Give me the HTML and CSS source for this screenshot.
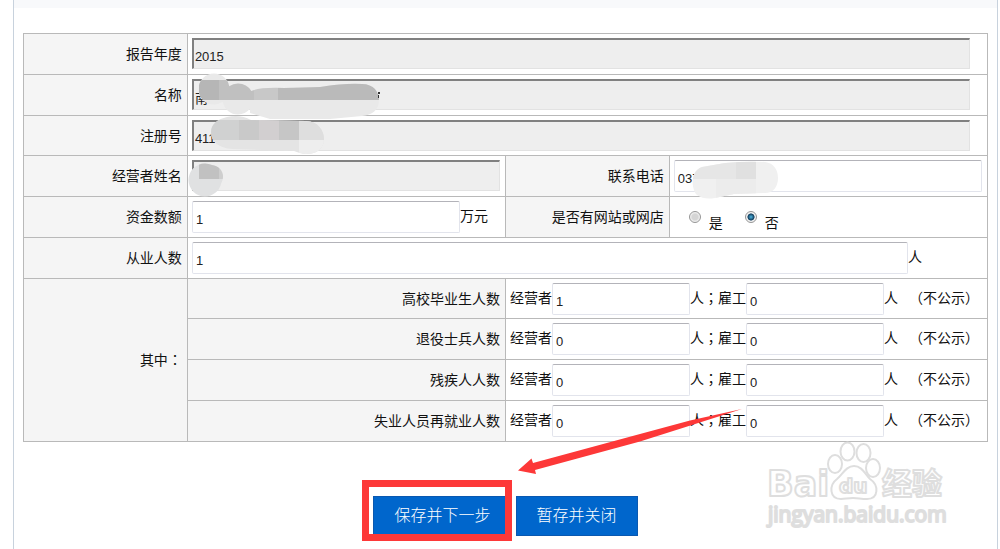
FILE: index.html
```html
<!DOCTYPE html>
<html lang="zh-CN">
<head>
<meta charset="utf-8">
<title>年度报告</title>
<link rel="stylesheet" href="styles.css">
</head>
<body>
<main class="panel">
  <div class="panel-strip"></div>
  <form class="report">
    <table class="form-table">
      <colgroup><col class="col-label"><col class="col-field"><col class="col-label"><col class="col-field"></colgroup>
      <tr>
        <th><label for="year">报告年度</label></th>
        <td colspan="3"><input class="field readonly inset" id="year" type="text" value="2015" readonly></td>
      </tr>
      <tr>
        <th><label for="name">名称</label></th>
        <td colspan="3">
          <input class="field readonly inset" id="name" type="text" value="南" readonly>
          <svg class="mask mask-name" viewBox="190 70 200 50" width="200" height="50" aria-hidden="true">
            <clipPath id="m1"><circle cx="214" cy="88" r="15.5"/><circle cx="238" cy="98" r="15.5"/><path d="M250 91Q256 86 284 87L320 86Q345 82 362 83C374 83 379 91 379 99C379 109 372 114 362 115L330 118H270L250 112Z"/></clipPath>
            <g clip-path="url(#m1)"><path fill="#e9e9e9" d="M190 70h200v50H190z"/><path fill="#b6b6b6" d="M199 79h20v20h-20z"/><path fill="#c0c0c0" d="M219 79h35v20h-35z"/><path fill="#c8c8c8" d="M254 79h24v20h-24z"/><path fill="#bababa" d="M278 79h110v20H278z"/></g>
            <path fill="#333" d="M378 91h2v2h-2zM378 94h1v3h-1z"/>
          </svg>
        </td>
      </tr>
      <tr>
        <th><label for="regno">注册号</label></th>
        <td colspan="3">
          <input class="field readonly inset" id="regno" type="text" value="411" readonly>
          <svg class="mask mask-regno" viewBox="205 110 125 45" width="125" height="45" aria-hidden="true">
            <clipPath id="m2"><path d="M227 116Q240 113 251 119L306 120C318 120 324 130 324 138C324 148 316 153 307 153C301 153 298 151 294 150L232 148C219 147 211 141 211 131C211 123 218 118 227 116Z"/></clipPath>
            <g clip-path="url(#m2)"><path fill="#e4e4e4" d="M205 110h125v45H205z"/><path fill="#d0d1d1" d="M205 119h34v20h-34z"/><path fill="#c9c9c9" d="M239 119h20v20h-20z"/><path fill="#d2cfd0" d="M259 119h20v20h-20z"/><path fill="#c6c6c6" d="M279 119h20v20h-20z"/><path fill="#dedede" d="M299 119h30v20h-30z"/><path fill="#eee" d="M299 139h30v20h-30z"/></g>
          </svg>
        </td>
      </tr>
      <tr>
        <th><label for="owner">经营者姓名</label></th>
        <td>
          <input class="field readonly" id="owner" type="text" readonly>
          <svg class="mask mask-owner" viewBox="188 160 40 40" width="40" height="40" aria-hidden="true">
            <clipPath id="m3"><circle cx="205" cy="180" r="16.5"/><circle cx="211" cy="177" r="12"/></clipPath>
            <g clip-path="url(#m3)"><path fill="#e0e1e2" d="M188 160h40v40h-40z"/><path fill="#c1c1c1" d="M199 160h20v19h-20z"/><path fill="#cecece" d="M219 160h9v19h-9z"/></g>
          </svg>
        </td>
        <th><label for="phone">联系电话</label></th>
        <td>
          <input class="field" id="phone" type="text" value="037">
          <svg class="mask mask-phone" viewBox="690 160 90 40" width="90" height="40" aria-hidden="true">
            <clipPath id="m4"><path d="M702 167L725 163Q745 161 765 162C774 163 778 170 778 178C778 187 773 193 765 193L734 194L715 198Q704 200 697 195C691 189 690 171 702 167Z"/></clipPath>
            <g clip-path="url(#m4)"><path fill="#f0f0f0" d="M690 160h90v40h-90z"/><path fill="#e6e6e6" d="M690 160h46v19h-46z"/><path fill="#e0e0e0" d="M736 160h20v19h-20z"/><path fill="#ececec" d="M716 179h40v20h-40z"/></g>
          </svg>
        </td>
      </tr>
      <tr>
        <th><label for="capital">资金数额</label></th>
        <td><div class="line"><input class="field" id="capital" type="text" value="1"><span class="unit unit-money">万元</span></div></td>
        <th id="shop-label">是否有网站或网店</th>
        <td>
          <div class="radios" role="radiogroup" aria-labelledby="shop-label">
            <label class="radio"><input type="radio" name="shop"><span>是</span></label>
            <label class="radio"><input type="radio" name="shop" checked><span>否</span></label>
          </div>
        </td>
      </tr>
      <tr>
        <th><label for="staff">从业人数</label></th>
        <td colspan="3"><div class="line"><input class="field" id="staff" type="text" value="1"><span class="unit unit-staff">人</span></div></td>
      </tr>
      <tr>
        <th rowspan="4">其中<span class="punct" lang="zh-TW">：</span></th>
        <th>高校毕业生人数</th>
        <td colspan="2"><div class="line"><label for="g1">经营者</label><input class="field" id="g1" type="text" value="1"><label for="g2">人<span class="punct" lang="zh-TW">；</span>雇工</label><input class="field" id="g2" type="text" value="0"><span class="unit unit-note">人<span class="note">（不公示）</span></span></div></td>
      </tr>
      <tr>
        <th>退役士兵人数</th>
        <td colspan="2"><div class="line"><label for="v1">经营者</label><input class="field" id="v1" type="text" value="0"><label for="v2">人<span class="punct" lang="zh-TW">；</span>雇工</label><input class="field" id="v2" type="text" value="0"><span class="unit unit-note">人<span class="note">（不公示）</span></span></div></td>
      </tr>
      <tr>
        <th>残疾人人数</th>
        <td colspan="2"><div class="line"><label for="d1">经营者</label><input class="field" id="d1" type="text" value="0"><label for="d2">人<span class="punct" lang="zh-TW">；</span>雇工</label><input class="field" id="d2" type="text" value="0"><span class="unit unit-note">人<span class="note">（不公示）</span></span></div></td>
      </tr>
      <tr>
        <th>失业人员再就业人数</th>
        <td colspan="2"><div class="line"><label for="u1">经营者</label><input class="field" id="u1" type="text" value="0"><label for="u2">人<span class="punct" lang="zh-TW">；</span>雇工</label><input class="field" id="u2" type="text" value="0"><span class="unit unit-note">人<span class="note">（不公示）</span></span></div></td>
      </tr>
    </table>
    <div class="actions">
      <div class="highlight">
        <button class="btn" type="button">保存并下一步</button>
        <svg class="arrow" viewBox="510 400 240 80" width="240" height="80" aria-hidden="true">
          <path fill="#fd3838" d="M518 470.500L531.500 458.500L533 463L640 434L690 420.500L742 409L692 425L640 441.500L535 470L536 474Z"/>
        </svg>
      </div>
      <button class="btn" type="button">暂存并关闭</button>
    </div>
  </form>
  <svg class="watermark" viewBox="762 440 188 92" width="188" height="92" role="img" aria-label="Baidu 经验">
    <g fill="#fff" stroke="#dedede" stroke-width="2" stroke-linejoin="round">
      <text class="wm-brand" x="767" y="496">Bai</text>
      <ellipse cx="835" cy="464" rx="7" ry="9"/><ellipse cx="847.500" cy="451.500" rx="7" ry="9"/><ellipse cx="863.500" cy="453" rx="7" ry="9"/><ellipse cx="873" cy="468" rx="7" ry="9"/>
      <path d="M854 466C862 466 865 474 870 479C879 485 879 499 867 499C861 499 858 498 853 498C848 498 845 499 841 499C829 499 829 485 837 479C843 474 846 466 854 466Z"/>
      <text class="wm-du" x="839" y="493">du</text>
      <text class="wm-cn" x="882" y="494">经验</text>
      <text class="wm-url" x="768" y="522">jingyan.baidu.com</text>
    </g>
  </svg>
</main>
</body>
</html>
```
FILE: styles.css
```css
* { box-sizing: border-box; }

body {
  margin: 0;
  background: #fff;
  color: #111;
  font: 14px/20px "Liberation Sans", "Noto Sans CJK SC", sans-serif;
}

.panel {
  position: relative;
  min-height: 100vh;
  margin: 0 2px 0 13px;
  border: solid #c8d2dd;
  border-width: 0 1px;
}

.panel-strip { height: 8px; background: #f8f9fb; }

.report { padding: 25px 9px 0; }

.form-table {
  width: 100%;
  table-layout: fixed;
  border-collapse: collapse;
}

.col-label { width: 17%; }
.col-field { width: 33%; }

.form-table tr { height: 41px; }
.form-table tr:nth-child(4n+3) { height: 40px; }

.form-table th,
.form-table td { border: 1px solid #b9b9b9; }

.form-table th {
  padding: 0 5px;
  background: #f5f5f5;
  font-weight: normal;
  text-align: right;
}

.form-table td {
  position: relative;
  padding: 4px 5px 3px 4px;
  vertical-align: top;
}

.field {
  display: block;
  width: 100%;
  min-width: 0;
  height: 32px;
  padding: 5px 3px 0;
  border: 1px solid #e2e4ec;
  border-top-color: #b3b3b9;
  border-radius: 2px;
  background: #fff;
  color: #222;
  font: 13px/20px "Liberation Sans", "Noto Sans CJK SC", sans-serif;
}

.readonly {
  height: 31px;
  padding: 4px 1px 0;
  border: 2px solid #808080;
  border-right: 1px solid #e2e2e2;
  border-bottom: 1px solid #e2e2e2;
  border-radius: 0;
  background: #eee;
}

.inset { width: calc(100% - 12px); }

.line { display: flex; align-items: center; white-space: nowrap; }
.line .field { flex: 1; }
.line label, .unit { flex: none; padding-bottom: 2px; }
.unit-money { width: 40px; }
.unit-staff { width: 74px; }
.unit-note { width: 98px; }
.note { margin-left: 11px; }
.punct { font-family: "Noto Sans CJK TC", sans-serif; line-height: 1; }

.radios { display: flex; gap: 22px; padding: 10px 15px 0; }
.radio { display: flex; gap: 8px; }
.radio span { padding-top: 2px; }
.radio input {
  appearance: none;
  width: 12px;
  height: 12px;
  margin: 0;
  border: 1px solid #969696;
  border-radius: 50%;
  background: radial-gradient(circle, #d5d5d5 40%, #f5f5f5 70%);
}
.radio input:checked {
  background: radial-gradient(circle, #3f9bc4 10%, #123c5c 45%, #f2f2f2 55%);
}

.mask { position: absolute; }
.mask-name { left: 2px; top: -4px; }
.mask-regno { left: 17px; top: -5px; }
.mask-owner { left: 0; top: 4px; }
.mask-phone { left: 20px; top: 4px; }

.actions {
  display: flex;
  justify-content: center;
  gap: 4px;
  padding-top: 54px;
}

.btn {
  height: 40px;
  padding: 0 20px 4px;
  border: 1px solid #0a58b0;
  background: #0066cc;
  color: #fff;
  font: 300 16px/24px "Noto Sans CJK SC", sans-serif;
}

.highlight { position: relative; }
.highlight::after {
  content: "";
  position: absolute;
  left: -11px;
  right: 0;
  top: -16px;
  bottom: -5px;
  border: 7px solid #fd3838;
}
.arrow { position: absolute; left: 137px; top: -96px; }

.watermark { position: absolute; right: 47px; bottom: 17px; }
.wm-brand { font: bold 35px "DejaVu Sans", sans-serif; }
.wm-du { font: bold 20px "DejaVu Sans", sans-serif; }
.wm-cn { font: bold 30px "Noto Sans CJK SC", sans-serif; }
.wm-url { font: 21px "Open Sans", sans-serif; }
```
